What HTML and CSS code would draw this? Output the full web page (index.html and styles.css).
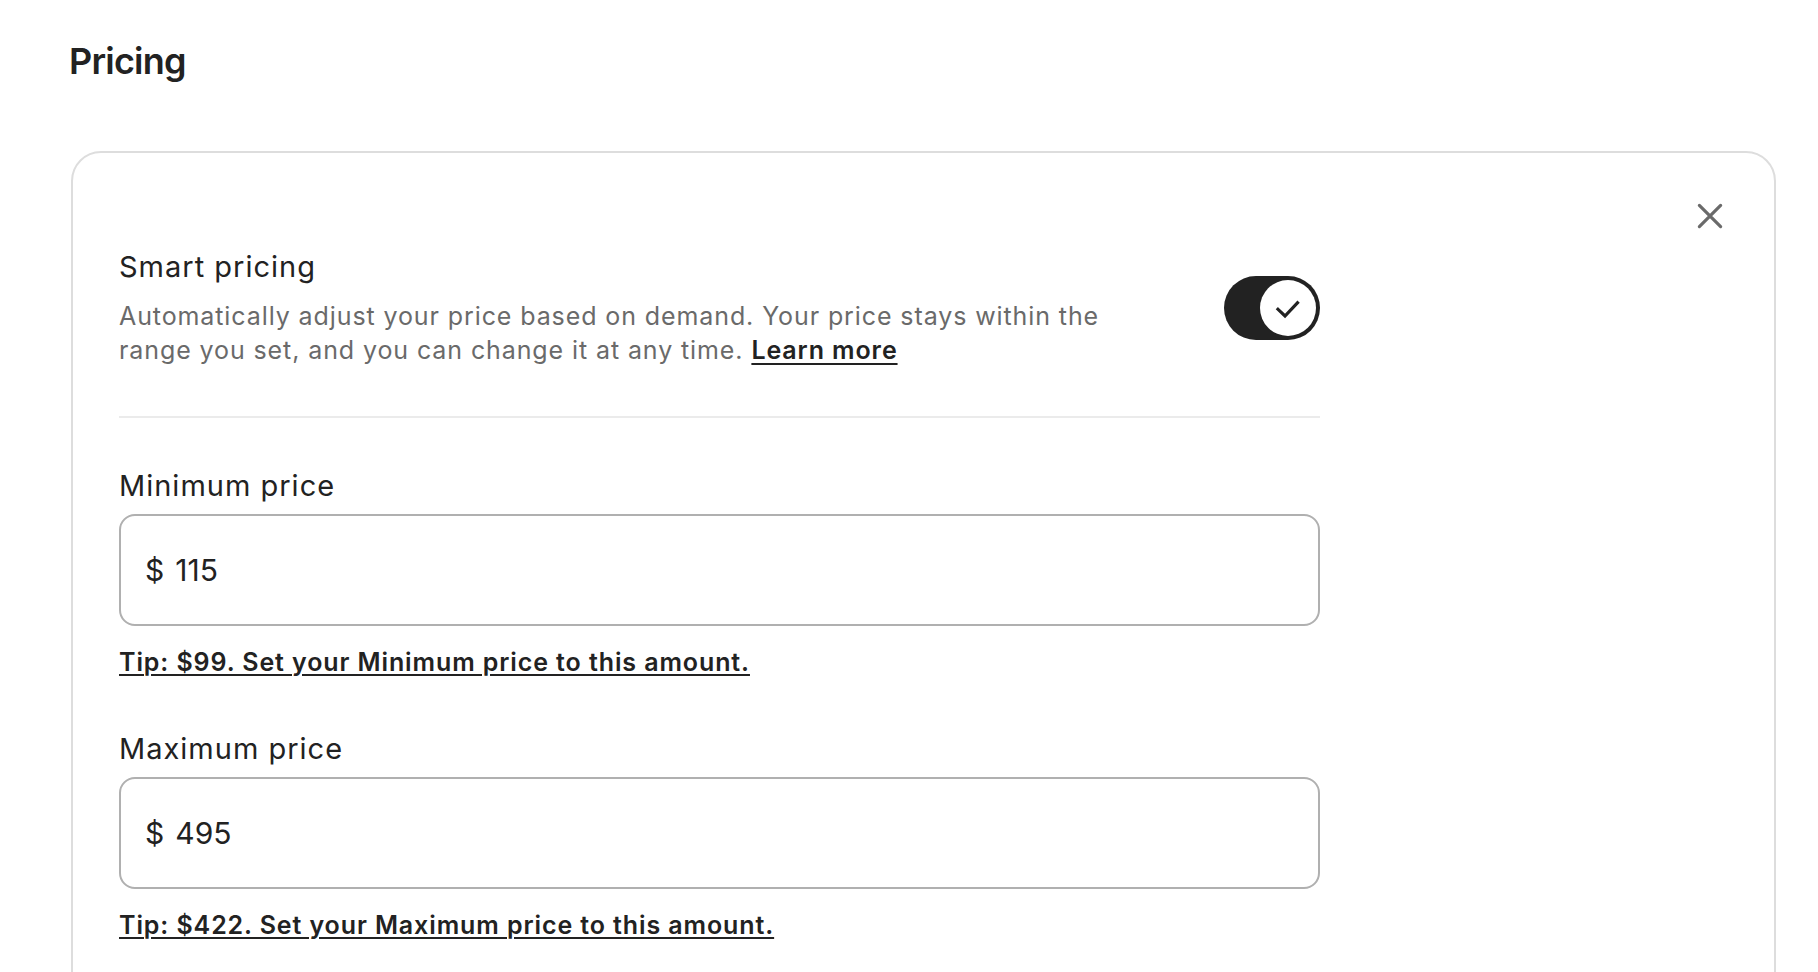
FILE: index.html
```html
<!DOCTYPE html>
<html lang="en">
<head>
<meta charset="utf-8">
<title>Pricing</title>
<link rel="stylesheet" href="styles.css">
</head>
<body>
<main class="page">
  <h1 class="page-title">Pricing</h1>
  <section class="card">
    <div class="card-top">
      <button class="close-btn" aria-label="Close">
        <svg viewBox="0 0 32 32" width="34" height="34" aria-hidden="true"><path d="m6 6 20 20M26 6 6 26"/></svg>
      </button>
    </div>
    <div class="content">
      <div class="smart-row">
        <div class="smart-text">
          <h2 class="smart-title">Smart pricing</h2>
          <p class="smart-desc">Automatically adjust your price based on demand. Your price stays within the range you set, and you can change it at any time. <a href="#" class="link">Learn more</a></p>
        </div>
        <div class="toggle" role="switch" aria-checked="true">
          <span class="knob">
            <svg viewBox="0 0 56 56" width="56" height="56" aria-hidden="true"><path d="M18 29.3 25 36 37.5 22.7"/></svg>
          </span>
        </div>
      </div>
      <hr class="divider">
      <div class="field">
        <label class="field-label">Minimum price</label>
        <div class="input-box"><span class="currency">$</span><span class="value">115</span></div>
        <a href="#" class="tip">Tip: $99. Set your Minimum price to this amount.</a>
      </div>
      <div class="field">
        <label class="field-label">Maximum price</label>
        <div class="input-box"><span class="currency">$</span><span class="value">495</span></div>
        <a href="#" class="tip">Tip: $422. Set your Maximum price to this amount.</a>
      </div>
    </div>
  </section>
</main>
</body>
</html>
```

FILE: styles.css
```css
* { box-sizing: border-box; }
html, body { margin: 0; padding: 0; background: #fff; }
body {
  font-family: Inter, "Noto Sans", "Liberation Sans", sans-serif;
  color: #222222;
  overflow: hidden;
}
.page {
  padding: 39px 42px 0 71px;
}
.page-title {
  margin: 0 0 0 -2px;
  font-size: 36px;
  line-height: 44px;
  font-weight: 600;
  letter-spacing: -0.8px;
}
.card {
  margin-top: 68px;
  border: 2px solid #dddddd;
  border-radius: 30px;
  padding: 43px 46px 200px 46px;
}
.card-top {
  display: flex;
  justify-content: flex-end;
}
.close-btn {
  width: 40px;
  height: 40px;
  margin-right: -2px;
  padding: 0;
  border: 0;
  background: transparent;
  display: flex;
  align-items: center;
  justify-content: center;
}
.close-btn svg {
  fill: none;
  stroke: #6a6a6a;
  stroke-width: 3;
  stroke-linecap: round;
}
.content {
  width: 1201px;
  margin-top: 13px;
}
.smart-row {
  display: flex;
  justify-content: space-between;
  align-items: flex-start;
}
.smart-text {
  width: 1020px;
}
.smart-title {
  margin: 0;
  font-size: 29px;
  line-height: 36px;
  font-weight: 400;
  letter-spacing: 1px;
}
.smart-desc {
  margin: 14px 0 0;
  font-size: 25px;
  line-height: 34px;
  color: #6a6a6a;
  letter-spacing: 0.9px;
}
.link {
  color: #222222;
  font-weight: 600;
  text-decoration: underline;
  text-decoration-thickness: 2px;
  text-underline-offset: 4px;
  text-decoration-skip-ink: none;
}
.toggle {
  margin-top: 27px;
  width: 96px;
  height: 64px;
  border-radius: 32px;
  background: #222222;
  padding: 4px;
  display: flex;
  justify-content: flex-end;
}
.knob {
  width: 56px;
  height: 56px;
  border-radius: 50%;
  background: #ffffff;
  display: block;
}
.knob svg {
  display: block;
  fill: none;
  stroke: #222222;
  stroke-width: 3.2;
  stroke-linecap: square;
}
.divider {
  margin: 49px 0 0;
  border: 0;
  border-top: 2px solid #ebebeb;
  height: 0;
}
.field {
  display: flex;
  flex-direction: column;
  align-items: flex-start;
}
.divider + .field { margin-top: 50px; }
.field + .field { margin-top: 53px; }
.field-label {
  font-size: 29px;
  line-height: 36px;
  font-weight: 400;
  letter-spacing: 1px;
}
.input-box {
  margin-top: 10px;
  width: 100%;
  height: 112px;
  border: 2px solid #b0b0b0;
  border-radius: 16px;
  padding: 0 24px;
  display: flex;
  align-items: center;
  font-size: 30px;
}
.currency { margin-right: 11px; }
.tip {
  margin-top: 20px;
  font-size: 25px;
  line-height: 32px;
  font-weight: 600;
  color: #222222;
  letter-spacing: 0.9px;
  text-decoration: underline;
  text-decoration-thickness: 2px;
  text-underline-offset: 3px;
}
```
